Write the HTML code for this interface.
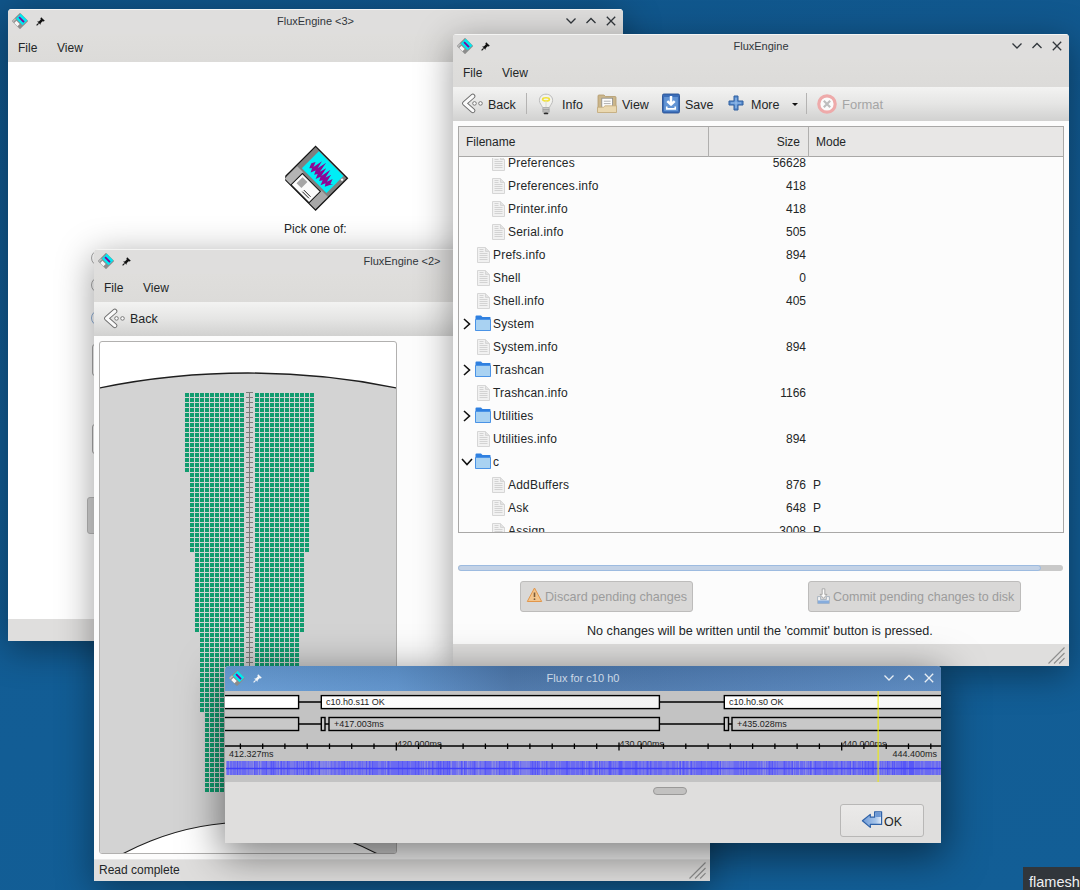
<!DOCTYPE html>
<html><head><meta charset="utf-8">
<style>
*{margin:0;padding:0;box-sizing:border-box}
html,body{width:1080px;height:890px;overflow:hidden}
body{position:relative;font-family:"Liberation Sans",sans-serif;font-size:12px;line-height:12px;color:#232627;
 background:linear-gradient(170deg,#10558a 0%,#125c94 40%,#125e96 100%)}
.a{position:absolute}
.t{position:absolute;white-space:nowrap}
.win{position:absolute;overflow:hidden;border-radius:4px 4px 0 0;background:#fcfcfc}
.sh{position:absolute;border-radius:4px 4px 0 0;box-shadow:0 3px 40px 2px rgba(0,0,0,.6)}
.tbar{position:absolute;left:0;right:0;top:0;height:25px;background:#dfdedd;border-top:1px solid #f4f4f3}
.ttl{position:absolute;left:0;right:0;top:7px;text-align:center;font-size:11px;line-height:11px;color:#31363b;white-space:nowrap}
.mbar{position:absolute;left:0;right:0;top:25px;height:28px;background:linear-gradient(#dfdedc,#dcdbd9)}
.tool{position:absolute;left:0;right:0;height:35px;background:linear-gradient(#f3f3f2,#e5e5e4 50%,#d1d1d0)}
.sbar{position:absolute;left:0;right:0;bottom:0;background:#dfdedd}
svg{position:absolute;overflow:visible}
.row{position:absolute;left:0;width:606px;height:23px}
</style></head><body>

<svg width="0" height="0" style="position:absolute">
<defs>
 <symbol id="appicon" viewBox="0 0 16 16">
  <g transform="rotate(45 8 8)">
   <rect x="2.2" y="2.2" width="11.6" height="11.6" fill="#8c8c8c"/>
   <rect x="3.4" y="2.4" width="9.4" height="6.8" fill="#00e8f0"/>
   <rect x="4.6" y="5" width="7" height="1.8" fill="#860096"/>
   <rect x="5.4" y="10.4" width="4.6" height="3.2" fill="#f6f6f6"/>
   <rect x="2.4" y="9.6" width="1.8" height="4" fill="#b8b8b8"/>
  </g>
 </symbol>
 <symbol id="pin" viewBox="0 0 10 10">
  <path d="M5.2 1.2 L8.8 4.8 L7.6 5.6 L6.6 5.2 L4.6 7.2 L4.8 8.2 L4.2 8.6 L1.4 5.8 L1.8 5.2 L2.8 5.4 L4.8 3.4 L4.4 2.4 Z" fill="#111"/>
  <path d="M2.6 7.4 L0.6 9.4" stroke="#111" stroke-width="1.2"/>
 </symbol>
 <symbol id="pinw" viewBox="0 0 10 10">
  <path d="M5.2 1.2 L8.8 4.8 L7.6 5.6 L6.6 5.2 L4.6 7.2 L4.8 8.2 L4.2 8.6 L1.4 5.8 L1.8 5.2 L2.8 5.4 L4.8 3.4 L4.4 2.4 Z" fill="#f4f6f8"/>
  <path d="M2.6 7.4 L0.6 9.4" stroke="#f4f6f8" stroke-width="1.2"/>
 </symbol>
 <symbol id="bmin" viewBox="0 0 12 12"><path d="M1.5 3.5 L6 8 L10.5 3.5" fill="none" stroke="currentColor" stroke-width="1.3"/></symbol>
 <symbol id="bmax" viewBox="0 0 12 12"><path d="M1.5 8 L6 3.5 L10.5 8" fill="none" stroke="currentColor" stroke-width="1.3"/></symbol>
 <symbol id="bclose" viewBox="0 0 12 12"><path d="M1.8 1.8 L10.2 10.2 M10.2 1.8 L1.8 10.2" fill="none" stroke="currentColor" stroke-width="1.3"/></symbol>
 <symbol id="file" viewBox="0 0 13 16">
  <path d="M0.5 0.5 H8.5 L12.5 4.5 V15.5 H0.5 Z" fill="#f1f1f1" stroke="#d6d6d6"/>
  <path d="M8.5 0.5 V4.5 H12.5" fill="#e2e2e2" stroke="#d6d6d6"/>
  <path d="M2.5 2.5 H6.5 M2.5 4.5 H6.5 M2.5 6.5 H10.5 M2.5 8.5 H10.5 M2.5 10.5 H10.5 M2.5 12.5 H10.5" stroke="#cfcfcf" stroke-width="0.9"/>
 </symbol>
 <symbol id="folder" viewBox="0 0 16 16">
  <path d="M0.5 1.5 Q0.5 0.5 1.5 0.5 H6 L7.5 2 H15 Q15.5 2 15.5 2.5 V15.5 H0.5 Z" fill="#2f80e0"/>
  <path d="M1 5 H15 V15 H1 Z" fill="#a9d2f2"/>
  <path d="M0.5 4.5 H15.5 V15.5 H0.5 Z" fill="none" stroke="#4a93e6" stroke-width="1"/>
 </symbol>
 <symbol id="chevR" viewBox="0 0 8 12"><path d="M1 1 L6.5 6 L1 11" fill="none" stroke="#111" stroke-width="1.6"/></symbol>
 <symbol id="chevD" viewBox="0 0 12 8"><path d="M1 1 L6 6.5 L11 1" fill="none" stroke="#111" stroke-width="1.6"/></symbol>
 <symbol id="back" viewBox="0 0 22 22">
  <path d="M11.8 3.2 L3.6 10.4 L11.8 17.6" fill="none" stroke="#6e6e6e" stroke-width="5" stroke-linecap="round" stroke-linejoin="round"/>
  <path d="M11.8 3.2 L3.6 10.4 L11.8 17.6" fill="none" stroke="#fafafa" stroke-width="3.2" stroke-linecap="round" stroke-linejoin="round"/>
  <circle cx="13.5" cy="10.4" r="1.8" fill="#fafafa" stroke="#6e6e6e" stroke-width="0.9"/>
  <circle cx="19.5" cy="10.4" r="1.8" fill="#fafafa" stroke="#6e6e6e" stroke-width="0.9"/>
 </symbol>
 <symbol id="bulb" viewBox="0 0 16 22">
  <path d="M8 1.2 C3.8 1.2 1.4 4 1.4 7.4 C1.4 10.4 3.6 11.8 4.6 14.6 H11.4 C12.4 11.8 14.6 10.4 14.6 7.4 C14.6 4 12.2 1.2 8 1.2 Z" fill="#f2f2ee" stroke="#b4b4b4" stroke-width="0.9"/>
  <ellipse cx="8" cy="6.4" rx="3.4" ry="1.6" fill="none" stroke="#f2e23a" stroke-width="1.6"/>
  <path d="M8 8 V14" stroke="#d8d8c8" stroke-width="0.9"/>
  <rect x="4.8" y="14.6" width="6.4" height="5.2" rx="0.8" fill="#d6d6d4" stroke="#9a9a9a" stroke-width="0.6"/>
  <path d="M4.8 16.3 H11.2 M4.8 18 H11.2" stroke="#8a8a8a" stroke-width="0.8"/>
  <ellipse cx="8" cy="20.4" rx="2.4" ry="0.9" fill="#2a2a2a"/>
 </symbol>
 <symbol id="viewf" viewBox="0 0 20 19">
  <path d="M1 2 Q1 1 2 1 H7 L8.5 2.5 H18 Q19 2.5 19 3.5 V18 H1 Z" fill="#cbb68b" stroke="#b39b6c" stroke-width="0.8"/>
  <rect x="4.8" y="4.2" width="10.8" height="10" fill="#fdfdfd" stroke="#8a8a8a" stroke-width="0.8"/>
  <path d="M6.8 7.2 H13.6 M6.8 9.6 H13.6" stroke="#b0b0b0" stroke-width="1"/>
  <path d="M0.5 13.2 H6.5 L8 11.8 H19.5 V18.5 H0.5 Z" fill="#ead8b0" stroke="#c2aa7a" stroke-width="0.8"/>
 </symbol>
 <symbol id="save" viewBox="0 0 19 21">
  <rect x="0.5" y="0.5" width="18" height="20" rx="1.5" fill="#3b6db8" stroke="#2a5496"/>
  <rect x="2.2" y="3.6" width="14.6" height="15" fill="#6294d4"/>
  <path d="M9.5 2.5 V11.5 M5.6 8 L9.5 11.8 L13.4 8" fill="none" stroke="#fff" stroke-width="2.6" stroke-linejoin="round"/>
  <path d="M5 13.6 V16.2 H14 V13.6" fill="none" stroke="#fff" stroke-width="1.7"/>
 </symbol>
 <symbol id="plus" viewBox="0 0 16 16">
  <path d="M6 1 H10 V6 H15 V10 H10 V15 H6 V10 H1 V6 H6 Z" fill="#5a8ed0" stroke="#2e5f9e" stroke-width="1"/>
  <path d="M8 3 V13 M3 8 H13" stroke="#9cc2ec" stroke-width="1"/>
 </symbol>
 <symbol id="fmt" viewBox="0 0 20 20">
  <circle cx="10" cy="10" r="8.2" fill="#fbfbfb" stroke="#eeaaaa" stroke-width="3.2"/>
  <path d="M6.8 6.8 L13.2 13.2 M13.2 6.8 L6.8 13.2" stroke="#bdbdbd" stroke-width="2.2"/>
 </symbol>
 <symbol id="warn" viewBox="0 0 16 16">
  <path d="M8 1 L15.2 14.5 H0.8 Z" fill="#f3c58d" stroke="#e2964a" stroke-width="1" stroke-linejoin="round"/>
  <path d="M8 5.5 V10" stroke="#7a5a3a" stroke-width="1.6"/><circle cx="8" cy="12.2" r="0.9" fill="#7a5a3a"/>
 </symbol>
 <symbol id="commit" viewBox="0 0 13 16">
  <path d="M0.6 8.6 H3.6 V11.6 H9.4 V8.6 H12.4 V15.4 H0.6 Z" fill="#f4f4f4" stroke="#9aa8b8" stroke-width="0.8"/>
  <rect x="1" y="12.4" width="11" height="3" fill="#86acdc"/>
  <path d="M5.2 0.8 H7.8 V6.4 H10 L6.5 10.4 L3 6.4 H5.2 Z" fill="#fafafa" stroke="#9c9c9c" stroke-width="0.8" stroke-linejoin="round"/>
 </symbol>
 <symbol id="okic" viewBox="0 0 22 19">
  <linearGradient id="okg" x1="0" x2="1" y1="0" y2="0"><stop offset="0" stop-color="#6f9ad6"/><stop offset="0.7" stop-color="#a9c6ea"/><stop offset="1" stop-color="#e6eef8"/></linearGradient>
  <path d="M1.4 9.8 L9.3 3.4 V6.2 H13.6 V0.8 H20.6 V13.4 H9.3 V16.4 Z" fill="url(#okg)" stroke="#2f62a8" stroke-width="1.2" stroke-linejoin="round"/>
  <rect x="14.4" y="1.6" width="5.4" height="4.4" fill="#6d98d4"/>
 </symbol>
 <symbol id="grip" viewBox="0 0 17 17">
  <path d="M0.5 16.5 L16.5 0.5 M6 16.5 L16.5 6 M11.2 16.5 L16.5 11.2" stroke="#8e8e8e" stroke-width="1.1"/>
 </symbol>
</defs>
</svg>

<div class="win" style="left:8px;top:9px;width:615px;height:632px;background:#fff;box-shadow:0 8px 36px 1px rgba(0,0,0,.38)">
<div class="tbar"></div>
<svg style="left:4px;top:4px" width="16" height="16" ><use href="#appicon" width="16" height="16"/></svg>
<svg style="left:28px;top:7px" width="10" height="10" ><use href="#pin" width="10" height="10"/></svg>
<div class="ttl" style="color:#31363b">FluxEngine &lt;3&gt;</div>
<svg style="left:557px;top:6px;color:#31363b" width="12" height="12"><use href="#bmin" width="12" height="12"/></svg>
<svg style="left:577px;top:6px;color:#31363b" width="12" height="12"><use href="#bmax" width="12" height="12"/></svg>
<svg style="left:597px;top:6px;color:#31363b" width="12" height="12"><use href="#bclose" width="12" height="12"/></svg>
<div class="mbar"></div><div class="t" style="left:10px;top:33px;font-size:12px;line-height:12px;">File</div><div class="t" style="left:49px;top:33px;font-size:12px;line-height:12px;">View</div>
<div class="sbar" style="height:22px"></div>
<svg style="left:274px;top:134px" width="68" height="68" viewBox="0 0 68 68">
<g transform="translate(33.6 3.4) rotate(45)">
<path d="M0 0 H45 V45 H3 L0 42 Z" fill="#808080" stroke="#141414" stroke-width="1.3"/>
<rect x="5.8" y="1.2" width="34.8" height="24" fill="#00eef6"/>
<path d="M9 15 L11 11 L13 16 L15 6 L17 14 L19 4 L21 15 L23 8 L25 17 L27 6 L29 15 L31 9 L33 17 L35 11 L37 16 L39 14 L37 18 L35 22 L33 19 L31 24 L29 19 L27 22 L25 18 L23 23 L21 18 L19 21 L17 17 L15 22 L13 18 L11 20 Z" fill="#8a0896"/>
<rect x="1" y="27" width="8.8" height="17.5" fill="#b4b4b4"/>
<rect x="35.2" y="27" width="9" height="17.5" fill="#a8a8a8"/>
<rect x="9.8" y="28.5" width="25.4" height="16" fill="#fbfbfb" stroke="#141414" stroke-width="1"/>
<rect x="12.5" y="31" width="7" height="8.5" fill="#a6a6a6"/>
<path d="M22.6 39.2 H32 M22.6 41.4 H32" stroke="#141414" stroke-width="0.9"/>
<rect x="41.2" y="3.8" width="2.2" height="2.2" fill="#f0f0f0"/>
</g></svg>
<div class="t" style="left:276px;top:214px;font-size:12px;line-height:12px;">Pick one of:</div>
<div class="a" style="left:83px;top:241px;width:16px;height:16px;border:1px solid #a8a8a8;border-radius:50%"></div>
<div class="a" style="left:83px;top:268px;width:16px;height:16px;border:1px solid #a8a8a8;border-radius:50%"></div>
<div class="a" style="left:83px;top:301px;width:16px;height:16px;border:1px solid #8fb0d8;border-radius:50%"></div>
<div class="a" style="left:84px;top:335px;width:20px;height:32px;border:1px solid #a8a8a8;border-radius:3px"></div>
<div class="a" style="left:84px;top:415px;width:20px;height:30px;border:1px solid #a8a8a8;border-radius:3px"></div>
<div class="a" style="left:79px;top:488px;width:20px;height:37px;background:#d4d4d4;border:1px solid #b8b8b8;border-radius:3px"></div>
</div>
<div class="win" style="left:94px;top:249px;width:616px;height:632px;background:#fcfcfc;box-shadow:0 8px 36px 1px rgba(0,0,0,.38)">
<div class="tbar"></div>
<svg style="left:4px;top:4px" width="16" height="16" ><use href="#appicon" width="16" height="16"/></svg>
<svg style="left:28px;top:7px" width="10" height="10" ><use href="#pin" width="10" height="10"/></svg>
<div class="ttl" style="color:#31363b">FluxEngine &lt;2&gt;</div>
<svg style="left:558px;top:6px;color:#31363b" width="12" height="12"><use href="#bmin" width="12" height="12"/></svg>
<svg style="left:578px;top:6px;color:#31363b" width="12" height="12"><use href="#bmax" width="12" height="12"/></svg>
<svg style="left:598px;top:6px;color:#31363b" width="12" height="12"><use href="#bclose" width="12" height="12"/></svg>
<div class="mbar"></div><div class="t" style="left:10px;top:33px;font-size:12px;line-height:12px;">File</div><div class="t" style="left:49px;top:33px;font-size:12px;line-height:12px;">View</div>
<div class="tool" style="top:53px;height:34px"></div>
<svg style="left:9px;top:59px" width="22" height="22" ><use href="#back" width="22" height="22"/></svg>
<div class="t" style="left:36px;top:64px;font-size:12.5px;line-height:12.5px;">Back</div>
<div class="a" style="left:5px;top:92px;width:298px;height:513px;border:1px solid #b1b0af;border-radius:3px;background:#fff;overflow:hidden">
<svg style="left:-1px;top:-1px" width="298" height="513" viewBox="99 341 298 513">
<circle cx="248" cy="1113" r="740" fill="#d3d3d3" stroke="#1e1e1e" stroke-width="1.3"/>
<circle cx="250" cy="1092" r="270" fill="#ffffff" stroke="#1e1e1e" stroke-width="1.2"/>
<defs><pattern id="cell" x="185" y="393" width="5" height="5" patternUnits="userSpaceOnUse"><rect x="0" y="0" width="4" height="4" fill="#119c6f"/></pattern></defs>
<rect x="185" y="393" width="60" height="80" fill="url(#cell)"/>
<rect x="255" y="393" width="60" height="80" fill="url(#cell)"/>
<rect x="190" y="473" width="55" height="80" fill="url(#cell)"/>
<rect x="255" y="473" width="55" height="80" fill="url(#cell)"/>
<rect x="195" y="553" width="50" height="80" fill="url(#cell)"/>
<rect x="255" y="553" width="50" height="80" fill="url(#cell)"/>
<rect x="200" y="633" width="45" height="80" fill="url(#cell)"/>
<rect x="255" y="633" width="45" height="80" fill="url(#cell)"/>
<rect x="205" y="713" width="40" height="80" fill="url(#cell)"/>
<rect x="255" y="713" width="40" height="80" fill="url(#cell)"/>
<path d="M249.5 392 V793 M246 392.5 H253 M246 397.5 H253 M246 402.5 H253 M246 407.5 H253 M246 412.5 H253 M246 417.5 H253 M246 422.5 H253 M246 427.5 H253 M246 432.5 H253 M246 437.5 H253 M246 442.5 H253 M246 447.5 H253 M246 452.5 H253 M246 457.5 H253 M246 462.5 H253 M246 467.5 H253 M246 472.5 H253 M246 477.5 H253 M246 482.5 H253 M246 487.5 H253 M246 492.5 H253 M246 497.5 H253 M246 502.5 H253 M246 507.5 H253 M246 512.5 H253 M246 517.5 H253 M246 522.5 H253 M246 527.5 H253 M246 532.5 H253 M246 537.5 H253 M246 542.5 H253 M246 547.5 H253 M246 552.5 H253 M246 557.5 H253 M246 562.5 H253 M246 567.5 H253 M246 572.5 H253 M246 577.5 H253 M246 582.5 H253 M246 587.5 H253 M246 592.5 H253 M246 597.5 H253 M246 602.5 H253 M246 607.5 H253 M246 612.5 H253 M246 617.5 H253 M246 622.5 H253 M246 627.5 H253 M246 632.5 H253 M246 637.5 H253 M246 642.5 H253 M246 647.5 H253 M246 652.5 H253 M246 657.5 H253 M246 662.5 H253 M246 667.5 H253 M246 672.5 H253 M246 677.5 H253 M246 682.5 H253 M246 687.5 H253 M246 692.5 H253 M246 697.5 H253 M246 702.5 H253 M246 707.5 H253 M246 712.5 H253 M246 717.5 H253 M246 722.5 H253 M246 727.5 H253 M246 732.5 H253 M246 737.5 H253 M246 742.5 H253 M246 747.5 H253 M246 752.5 H253 M246 757.5 H253 M246 762.5 H253 M246 767.5 H253 M246 772.5 H253 M246 777.5 H253 M246 782.5 H253 M246 787.5 H253 M246 792.5 H253" stroke="#7c7c7c" stroke-width="1"/>
</svg></div>
<div class="sbar" style="height:22px;border-top:1px solid #e8e8e8"></div>
<div class="t" style="left:5px;top:615px;font-size:12px;line-height:12px;">Read complete</div>
<svg style="left:595px;top:613px" width="17" height="17" ><use href="#grip" width="17" height="17"/></svg>
</div>
<div class="win" style="left:453px;top:34px;width:616px;height:632px;background:#fcfcfc;box-shadow:0 8px 36px 1px rgba(0,0,0,.38)">
<div class="tbar"></div>
<svg style="left:4px;top:4px" width="16" height="16" ><use href="#appicon" width="16" height="16"/></svg>
<svg style="left:28px;top:7px" width="10" height="10" ><use href="#pin" width="10" height="10"/></svg>
<div class="ttl" style="color:#31363b">FluxEngine</div>
<svg style="left:558px;top:6px;color:#31363b" width="12" height="12"><use href="#bmin" width="12" height="12"/></svg>
<svg style="left:578px;top:6px;color:#31363b" width="12" height="12"><use href="#bmax" width="12" height="12"/></svg>
<svg style="left:598px;top:6px;color:#31363b" width="12" height="12"><use href="#bclose" width="12" height="12"/></svg>
<div class="mbar"></div><div class="t" style="left:10px;top:33px;font-size:12px;line-height:12px;">File</div><div class="t" style="left:49px;top:33px;font-size:12px;line-height:12px;">View</div>
<div class="tool" style="top:53px;height:34px"></div>
<svg style="left:8px;top:59px" width="22" height="22" ><use href="#back" width="22" height="22"/></svg>
<div class="t" style="left:35px;top:65px;font-size:12.5px;line-height:12.5px;">Back</div>
<div class="a" style="left:73px;top:59px;width:1px;height:21px;background:#b4b3b2"></div>
<svg style="left:85px;top:59px" width="16" height="22" ><use href="#bulb" width="16" height="22"/></svg>
<div class="t" style="left:109px;top:65px;font-size:12.5px;line-height:12.5px;">Info</div>
<svg style="left:144px;top:60px" width="20" height="19" ><use href="#viewf" width="20" height="19"/></svg>
<div class="t" style="left:169px;top:65px;font-size:12.5px;line-height:12.5px;">View</div>
<svg style="left:209px;top:59px" width="18" height="21" ><use href="#save" width="18" height="21"/></svg>
<div class="t" style="left:232px;top:65px;font-size:12.5px;line-height:12.5px;">Save</div>
<svg style="left:275px;top:61px" width="16" height="16" ><use href="#plus" width="16" height="16"/></svg>
<div class="t" style="left:298px;top:65px;font-size:12.5px;line-height:12.5px;">More</div>
<div class="a" style="left:339px;top:69px;width:0;height:0;border-left:3px solid transparent;border-right:3px solid transparent;border-top:3px solid #111"></div>
<div class="a" style="left:353px;top:59px;width:1px;height:21px;background:#b4b3b2"></div>
<svg style="left:364px;top:60px" width="20" height="20" ><use href="#fmt" width="20" height="20"/></svg>
<div class="t" style="left:389px;top:64px;font-size:13px;line-height:13px;color:#a5a5a5;">Format</div>
<div class="a" style="left:5px;top:92px;width:606px;height:407px;border:1px solid #a9a8a7;background:#fcfcfc;overflow:hidden">
<div class="a" style="left:0;top:0;width:605px;height:30px;background:#e8e7e6;border-bottom:1px solid #a9a8a7"></div>
<div class="a" style="left:249px;top:0;width:1px;height:30px;background:#b0afae"></div>
<div class="a" style="left:349px;top:0;width:1px;height:30px;background:#b0afae"></div>
<div class="t" style="left:7px;top:9px;font-size:12px;line-height:12px;">Filename</div>
<div class="t" style="left:0;width:341px;top:9px;text-align:right;font-size:12px;line-height:12px">Size</div>
<div class="t" style="left:357px;top:9px;font-size:12px;line-height:12px;">Mode</div>
<div class="a" style="left:0;top:31px;width:605px;height:375px;overflow:hidden">
<svg style="left:33px;top:-3px" width="13" height="16" ><use href="#file" width="13" height="16"/></svg>
<div class="t" style="left:49px;top:-1px;font-size:12px;line-height:12px;letter-spacing:0.2px">Preferences</div>
<div class="t" style="left:0;width:347px;top:-1px;text-align:right;font-size:12px;line-height:12px">56628</div>
<svg style="left:33px;top:20px" width="13" height="16" ><use href="#file" width="13" height="16"/></svg>
<div class="t" style="left:49px;top:22px;font-size:12px;line-height:12px;letter-spacing:0.2px">Preferences.info</div>
<div class="t" style="left:0;width:347px;top:22px;text-align:right;font-size:12px;line-height:12px">418</div>
<svg style="left:33px;top:43px" width="13" height="16" ><use href="#file" width="13" height="16"/></svg>
<div class="t" style="left:49px;top:45px;font-size:12px;line-height:12px;letter-spacing:0.2px">Printer.info</div>
<div class="t" style="left:0;width:347px;top:45px;text-align:right;font-size:12px;line-height:12px">418</div>
<svg style="left:33px;top:66px" width="13" height="16" ><use href="#file" width="13" height="16"/></svg>
<div class="t" style="left:49px;top:68px;font-size:12px;line-height:12px;letter-spacing:0.2px">Serial.info</div>
<div class="t" style="left:0;width:347px;top:68px;text-align:right;font-size:12px;line-height:12px">505</div>
<svg style="left:18px;top:89px" width="13" height="16" ><use href="#file" width="13" height="16"/></svg>
<div class="t" style="left:34px;top:91px;font-size:12px;line-height:12px;letter-spacing:0.2px">Prefs.info</div>
<div class="t" style="left:0;width:347px;top:91px;text-align:right;font-size:12px;line-height:12px">894</div>
<svg style="left:18px;top:112px" width="13" height="16" ><use href="#file" width="13" height="16"/></svg>
<div class="t" style="left:34px;top:114px;font-size:12px;line-height:12px;letter-spacing:0.2px">Shell</div>
<div class="t" style="left:0;width:347px;top:114px;text-align:right;font-size:12px;line-height:12px">0</div>
<svg style="left:18px;top:135px" width="13" height="16" ><use href="#file" width="13" height="16"/></svg>
<div class="t" style="left:34px;top:137px;font-size:12px;line-height:12px;letter-spacing:0.2px">Shell.info</div>
<div class="t" style="left:0;width:347px;top:137px;text-align:right;font-size:12px;line-height:12px">405</div>
<svg style="left:16px;top:157px" width="16" height="16" ><use href="#folder" width="16" height="16"/></svg>
<svg style="left:4px;top:160px" width="8" height="12" ><use href="#chevR" width="8" height="12"/></svg>
<div class="t" style="left:34px;top:160px;font-size:12px;line-height:12px;letter-spacing:0.2px">System</div>
<svg style="left:18px;top:181px" width="13" height="16" ><use href="#file" width="13" height="16"/></svg>
<div class="t" style="left:34px;top:183px;font-size:12px;line-height:12px;letter-spacing:0.2px">System.info</div>
<div class="t" style="left:0;width:347px;top:183px;text-align:right;font-size:12px;line-height:12px">894</div>
<svg style="left:16px;top:203px" width="16" height="16" ><use href="#folder" width="16" height="16"/></svg>
<svg style="left:4px;top:206px" width="8" height="12" ><use href="#chevR" width="8" height="12"/></svg>
<div class="t" style="left:34px;top:206px;font-size:12px;line-height:12px;letter-spacing:0.2px">Trashcan</div>
<svg style="left:18px;top:227px" width="13" height="16" ><use href="#file" width="13" height="16"/></svg>
<div class="t" style="left:34px;top:229px;font-size:12px;line-height:12px;letter-spacing:0.2px">Trashcan.info</div>
<div class="t" style="left:0;width:347px;top:229px;text-align:right;font-size:12px;line-height:12px">1166</div>
<svg style="left:16px;top:249px" width="16" height="16" ><use href="#folder" width="16" height="16"/></svg>
<svg style="left:4px;top:252px" width="8" height="12" ><use href="#chevR" width="8" height="12"/></svg>
<div class="t" style="left:34px;top:252px;font-size:12px;line-height:12px;letter-spacing:0.2px">Utilities</div>
<svg style="left:18px;top:273px" width="13" height="16" ><use href="#file" width="13" height="16"/></svg>
<div class="t" style="left:34px;top:275px;font-size:12px;line-height:12px;letter-spacing:0.2px">Utilities.info</div>
<div class="t" style="left:0;width:347px;top:275px;text-align:right;font-size:12px;line-height:12px">894</div>
<svg style="left:16px;top:295px" width="16" height="16" ><use href="#folder" width="16" height="16"/></svg>
<svg style="left:2px;top:300px" width="12" height="8" ><use href="#chevD" width="12" height="8"/></svg>
<div class="t" style="left:34px;top:298px;font-size:12px;line-height:12px;letter-spacing:0.2px">c</div>
<svg style="left:33px;top:319px" width="13" height="16" ><use href="#file" width="13" height="16"/></svg>
<div class="t" style="left:49px;top:321px;font-size:12px;line-height:12px;letter-spacing:0.2px">AddBuffers</div>
<div class="t" style="left:0;width:347px;top:321px;text-align:right;font-size:12px;line-height:12px">876</div>
<div class="t" style="left:354px;top:321px;font-size:12px;line-height:12px;">P</div>
<svg style="left:33px;top:342px" width="13" height="16" ><use href="#file" width="13" height="16"/></svg>
<div class="t" style="left:49px;top:344px;font-size:12px;line-height:12px;letter-spacing:0.2px">Ask</div>
<div class="t" style="left:0;width:347px;top:344px;text-align:right;font-size:12px;line-height:12px">648</div>
<div class="t" style="left:354px;top:344px;font-size:12px;line-height:12px;">P</div>
<svg style="left:33px;top:365px" width="13" height="16" ><use href="#file" width="13" height="16"/></svg>
<div class="t" style="left:49px;top:367px;font-size:12px;line-height:12px;letter-spacing:0.2px">Assign</div>
<div class="t" style="left:0;width:347px;top:367px;text-align:right;font-size:12px;line-height:12px">3008</div>
<div class="t" style="left:354px;top:367px;font-size:12px;line-height:12px;">P</div>
</div>
</div>
<div class="a" style="left:5px;top:531px;width:605px;height:6px;border-radius:3px;background:#c9c9c9;overflow:hidden"><div class="a" style="left:0;top:0;width:583px;height:6px;border-radius:3px;background:#c3d2e6;border:1px solid #9dbbe0"></div></div>
<div class="a" style="left:67px;top:547px;width:173px;height:31px;border:1px solid #bdbcbb;border-radius:3px;background:#d9d8d7"></div>
<svg style="left:73px;top:553px" width="17" height="16" ><use href="#warn" width="17" height="16"/></svg>
<div class="t" style="left:92px;top:557px;font-size:12.6px;line-height:12.6px;color:#9c9c9c;">Discard pending changes</div>
<div class="a" style="left:355px;top:547px;width:213px;height:31px;border:1px solid #bdbcbb;border-radius:3px;background:#d9d8d7"></div>
<svg style="left:364px;top:554px" width="13" height="16" ><use href="#commit" width="13" height="16"/></svg>
<div class="t" style="left:380px;top:557px;font-size:12.5px;line-height:12.5px;color:#9c9c9c;">Commit pending changes to disk</div>
<div class="t" style="left:134px;top:591px;font-size:12.6px;line-height:12.6px;">No changes will be written until the 'commit' button is pressed.</div>
<div class="sbar" style="height:22px"></div>
<svg style="left:595px;top:613px" width="17" height="17" ><use href="#grip" width="17" height="17"/></svg>
</div>
<div class="win" style="left:225px;top:666px;width:716px;height:177px;background:#dfdedd;box-shadow:0 10px 40px 3px rgba(0,0,0,.5)">
<div class="tbar" style="background:linear-gradient(rgba(0,0,0,.06),rgba(255,255,255,.04)),linear-gradient(90deg,#6499d1 0%,#5c90c9 24%,#4a74a7 40%,#4c78ad 60%,#5887be 100%);border-top:0"></div>
<svg style="left:4px;top:4px" width="16" height="16" ><use href="#appicon" width="16" height="16"/></svg>
<svg style="left:28px;top:7px" width="10" height="10" ><use href="#pinw" width="10" height="10"/></svg>
<div class="ttl" style="color:#ccd9e6">Flux for c10 h0</div>
<svg style="left:658px;top:6px;color:#e8eef4" width="12" height="12"><use href="#bmin" width="12" height="12"/></svg>
<svg style="left:678px;top:6px;color:#e8eef4" width="12" height="12"><use href="#bmax" width="12" height="12"/></svg>
<svg style="left:698px;top:6px;color:#e8eef4" width="12" height="12"><use href="#bclose" width="12" height="12"/></svg>
<svg style="left:0;top:25px" width="716" height="91" viewBox="225 691 716 91">
<rect x="225" y="691" width="716" height="91" fill="#c3c3c3"/>
<defs><linearGradient id="wg" x1="0" x2="1"><stop offset="0" stop-color="#fff"/><stop offset="1" stop-color="#f2f2f2"/></linearGradient></defs>
<path d="M298.6 702 H321.3 M659.4 702 H724.3 M298.6 724 H321.3 M325 724 H329 M659.4 724 H724.3 M728.5 724 H732" stroke="#000" stroke-width="1.4"/>
<rect x="200" y="695.6" width="98.60000000000002" height="13.0" fill="#fff" stroke="#000" stroke-width="1.4"/>
<rect x="321.3" y="695.6" width="338.09999999999997" height="13.0" fill="url(#wg)" stroke="#000" stroke-width="1.4"/>
<rect x="724.3" y="695.6" width="275.70000000000005" height="13.0" fill="url(#wg)" stroke="#000" stroke-width="1.4"/>
<rect x="200" y="717.5" width="98.60000000000002" height="13.0" fill="#c8c8c8" stroke="#000" stroke-width="1.4"/>
<rect x="321.3" y="717.5" width="3.6999999999999886" height="13.0" fill="#c8c8c8" stroke="#000" stroke-width="1.4"/>
<rect x="329" y="717.5" width="330.4" height="13.0" fill="#c8c8c8" stroke="#000" stroke-width="1.4"/>
<rect x="724.3" y="717.5" width="4.2000000000000455" height="13.0" fill="#c8c8c8" stroke="#000" stroke-width="1.4"/>
<rect x="732" y="717.5" width="268" height="13.0" fill="#c8c8c8" stroke="#000" stroke-width="1.4"/>
<path d="M225 746 H941" stroke="#000" stroke-width="1.3"/>
<path d="M240.4 743.5 V749 M262.7 743.5 V749 M284.9 743.5 V749 M307.2 743.5 V749 M329.5 743.5 V749 M351.7 743.5 V749 M374.0 743.5 V749 M396.3 742.5 V750.5 M418.5 743.5 V749 M440.8 743.5 V749 M463.1 743.5 V749 M485.4 743.5 V749 M507.6 743.5 V749 M529.9 743.5 V749 M552.2 743.5 V749 M574.4 743.5 V749 M596.7 743.5 V749 M619.0 742.5 V750.5 M641.2 743.5 V749 M663.5 743.5 V749 M685.8 743.5 V749 M708.1 743.5 V749 M730.3 743.5 V749 M752.6 743.5 V749 M774.9 743.5 V749 M797.1 743.5 V749 M819.4 743.5 V749 M841.7 742.5 V750.5 M863.9 743.5 V749 M886.2 743.5 V749 M908.5 743.5 V749 M930.8 743.5 V749" stroke="#000" stroke-width="1.3"/>
<g font-family="Liberation Sans" font-size="9" fill="#222">
<text x="326" y="705">c10.h0.s11 OK</text>
<text x="729" y="705">c10.h0.s0 OK</text>
<text x="334" y="727">+417.003ms</text>
<text x="737" y="727">+435.028ms</text>
<text x="397" y="747">420.000ms</text>
<text x="619.5" y="747">430.000ms</text>
<text x="842" y="747">440.000ms</text>
<text x="229" y="757">412.327ms</text>
<text x="937" y="757" text-anchor="end">444.400ms</text>
</g>
<rect x="226" y="761" width="715" height="14" fill="#6a6af2"/>
<rect x="226" y="761" width="1" height="14" fill="#8c8ce4"/>
<rect x="229" y="761" width="1" height="14" fill="#8c8ce4"/>
<rect x="232" y="761" width="1" height="14" fill="#7a7aea"/>
<rect x="236" y="761" width="1" height="14" fill="#7a7aea"/>
<rect x="237" y="761" width="1" height="14" fill="#5858f6"/>
<rect x="238" y="761" width="1" height="14" fill="#7a7aea"/>
<rect x="241" y="761" width="1" height="14" fill="#7a7aea"/>
<rect x="246" y="761" width="1" height="14" fill="#7a7aea"/>
<rect x="247" y="761" width="1" height="14" fill="#7a7aea"/>
<rect x="249" y="761" width="1" height="14" fill="#7a7aea"/>
<rect x="250" y="761" width="1" height="14" fill="#7a7aea"/>
<rect x="251" y="761" width="1" height="14" fill="#7a7aea"/>
<rect x="252" y="761" width="1" height="14" fill="#7a7aea"/>
<rect x="253" y="761" width="1" height="14" fill="#8c8ce4"/>
<rect x="254" y="761" width="1" height="14" fill="#5858f6"/>
<rect x="258" y="761" width="1" height="14" fill="#8c8ce4"/>
<rect x="260" y="761" width="1" height="14" fill="#8c8ce4"/>
<rect x="261" y="761" width="1" height="14" fill="#7a7aea"/>
<rect x="266" y="761" width="1" height="14" fill="#5858f6"/>
<rect x="267" y="761" width="1" height="14" fill="#7a7aea"/>
<rect x="268" y="761" width="1" height="14" fill="#7a7aea"/>
<rect x="269" y="761" width="1" height="14" fill="#7a7aea"/>
<rect x="271" y="761" width="1" height="14" fill="#5858f6"/>
<rect x="273" y="761" width="1" height="14" fill="#5858f6"/>
<rect x="276" y="761" width="1" height="14" fill="#7a7aea"/>
<rect x="277" y="761" width="1" height="14" fill="#7a7aea"/>
<rect x="279" y="761" width="1" height="14" fill="#8c8ce4"/>
<rect x="281" y="761" width="1" height="14" fill="#5858f6"/>
<rect x="282" y="761" width="1" height="14" fill="#7a7aea"/>
<rect x="285" y="761" width="1" height="14" fill="#7a7aea"/>
<rect x="286" y="761" width="1" height="14" fill="#7a7aea"/>
<rect x="287" y="761" width="1" height="14" fill="#5858f6"/>
<rect x="290" y="761" width="1" height="14" fill="#7a7aea"/>
<rect x="291" y="761" width="1" height="14" fill="#7a7aea"/>
<rect x="292" y="761" width="1" height="14" fill="#7a7aea"/>
<rect x="293" y="761" width="1" height="14" fill="#7a7aea"/>
<rect x="295" y="761" width="1" height="14" fill="#7a7aea"/>
<rect x="297" y="761" width="1" height="14" fill="#5858f6"/>
<rect x="298" y="761" width="1" height="14" fill="#7a7aea"/>
<rect x="300" y="761" width="1" height="14" fill="#7a7aea"/>
<rect x="302" y="761" width="1" height="14" fill="#7a7aea"/>
<rect x="303" y="761" width="1" height="14" fill="#5858f6"/>
<rect x="304" y="761" width="1" height="14" fill="#7a7aea"/>
<rect x="305" y="761" width="1" height="14" fill="#7a7aea"/>
<rect x="308" y="761" width="1" height="14" fill="#5858f6"/>
<rect x="310" y="761" width="1" height="14" fill="#7a7aea"/>
<rect x="311" y="761" width="1" height="14" fill="#5858f6"/>
<rect x="314" y="761" width="1" height="14" fill="#7a7aea"/>
<rect x="316" y="761" width="1" height="14" fill="#7a7aea"/>
<rect x="317" y="761" width="1" height="14" fill="#7a7aea"/>
<rect x="319" y="761" width="1" height="14" fill="#5858f6"/>
<rect x="320" y="761" width="1" height="14" fill="#7a7aea"/>
<rect x="321" y="761" width="1" height="14" fill="#7a7aea"/>
<rect x="322" y="761" width="1" height="14" fill="#7a7aea"/>
<rect x="324" y="761" width="1" height="14" fill="#7a7aea"/>
<rect x="326" y="761" width="1" height="14" fill="#5858f6"/>
<rect x="327" y="761" width="1" height="14" fill="#8c8ce4"/>
<rect x="329" y="761" width="1" height="14" fill="#8c8ce4"/>
<rect x="332" y="761" width="1" height="14" fill="#7a7aea"/>
<rect x="333" y="761" width="1" height="14" fill="#7a7aea"/>
<rect x="336" y="761" width="1" height="14" fill="#7a7aea"/>
<rect x="337" y="761" width="1" height="14" fill="#7a7aea"/>
<rect x="340" y="761" width="1" height="14" fill="#7a7aea"/>
<rect x="344" y="761" width="1" height="14" fill="#5858f6"/>
<rect x="345" y="761" width="1" height="14" fill="#7a7aea"/>
<rect x="346" y="761" width="1" height="14" fill="#7a7aea"/>
<rect x="348" y="761" width="1" height="14" fill="#7a7aea"/>
<rect x="350" y="761" width="1" height="14" fill="#7a7aea"/>
<rect x="353" y="761" width="1" height="14" fill="#7a7aea"/>
<rect x="354" y="761" width="1" height="14" fill="#7a7aea"/>
<rect x="356" y="761" width="1" height="14" fill="#7a7aea"/>
<rect x="357" y="761" width="1" height="14" fill="#7a7aea"/>
<rect x="361" y="761" width="1" height="14" fill="#7a7aea"/>
<rect x="363" y="761" width="1" height="14" fill="#7a7aea"/>
<rect x="364" y="761" width="1" height="14" fill="#7a7aea"/>
<rect x="365" y="761" width="1" height="14" fill="#7a7aea"/>
<rect x="366" y="761" width="1" height="14" fill="#5858f6"/>
<rect x="367" y="761" width="1" height="14" fill="#7a7aea"/>
<rect x="368" y="761" width="1" height="14" fill="#7a7aea"/>
<rect x="369" y="761" width="1" height="14" fill="#5858f6"/>
<rect x="371" y="761" width="1" height="14" fill="#7a7aea"/>
<rect x="372" y="761" width="1" height="14" fill="#5858f6"/>
<rect x="378" y="761" width="1" height="14" fill="#7a7aea"/>
<rect x="379" y="761" width="1" height="14" fill="#7a7aea"/>
<rect x="380" y="761" width="1" height="14" fill="#7a7aea"/>
<rect x="384" y="761" width="1" height="14" fill="#7a7aea"/>
<rect x="386" y="761" width="1" height="14" fill="#8c8ce4"/>
<rect x="388" y="761" width="1" height="14" fill="#5858f6"/>
<rect x="390" y="761" width="1" height="14" fill="#7a7aea"/>
<rect x="398" y="761" width="1" height="14" fill="#5858f6"/>
<rect x="402" y="761" width="1" height="14" fill="#5858f6"/>
<rect x="407" y="761" width="1" height="14" fill="#5858f6"/>
<rect x="410" y="761" width="1" height="14" fill="#7a7aea"/>
<rect x="415" y="761" width="1" height="14" fill="#5858f6"/>
<rect x="418" y="761" width="1" height="14" fill="#5858f6"/>
<rect x="420" y="761" width="1" height="14" fill="#7a7aea"/>
<rect x="422" y="761" width="1" height="14" fill="#7a7aea"/>
<rect x="424" y="761" width="1" height="14" fill="#8c8ce4"/>
<rect x="425" y="761" width="1" height="14" fill="#7a7aea"/>
<rect x="427" y="761" width="1" height="14" fill="#8c8ce4"/>
<rect x="430" y="761" width="1" height="14" fill="#7a7aea"/>
<rect x="431" y="761" width="1" height="14" fill="#7a7aea"/>
<rect x="432" y="761" width="1" height="14" fill="#5858f6"/>
<rect x="434" y="761" width="1" height="14" fill="#7a7aea"/>
<rect x="435" y="761" width="1" height="14" fill="#7a7aea"/>
<rect x="438" y="761" width="1" height="14" fill="#5858f6"/>
<rect x="440" y="761" width="1" height="14" fill="#5858f6"/>
<rect x="442" y="761" width="1" height="14" fill="#7a7aea"/>
<rect x="443" y="761" width="1" height="14" fill="#5858f6"/>
<rect x="447" y="761" width="1" height="14" fill="#5858f6"/>
<rect x="449" y="761" width="1" height="14" fill="#5858f6"/>
<rect x="450" y="761" width="1" height="14" fill="#7a7aea"/>
<rect x="451" y="761" width="1" height="14" fill="#8c8ce4"/>
<rect x="456" y="761" width="1" height="14" fill="#7a7aea"/>
<rect x="457" y="761" width="1" height="14" fill="#7a7aea"/>
<rect x="458" y="761" width="1" height="14" fill="#8c8ce4"/>
<rect x="459" y="761" width="1" height="14" fill="#7a7aea"/>
<rect x="460" y="761" width="1" height="14" fill="#7a7aea"/>
<rect x="461" y="761" width="1" height="14" fill="#5858f6"/>
<rect x="463" y="761" width="1" height="14" fill="#8c8ce4"/>
<rect x="464" y="761" width="1" height="14" fill="#5858f6"/>
<rect x="467" y="761" width="1" height="14" fill="#8c8ce4"/>
<rect x="468" y="761" width="1" height="14" fill="#7a7aea"/>
<rect x="469" y="761" width="1" height="14" fill="#7a7aea"/>
<rect x="471" y="761" width="1" height="14" fill="#7a7aea"/>
<rect x="474" y="761" width="1" height="14" fill="#5858f6"/>
<rect x="476" y="761" width="1" height="14" fill="#7a7aea"/>
<rect x="477" y="761" width="1" height="14" fill="#7a7aea"/>
<rect x="478" y="761" width="1" height="14" fill="#8c8ce4"/>
<rect x="479" y="761" width="1" height="14" fill="#7a7aea"/>
<rect x="481" y="761" width="1" height="14" fill="#7a7aea"/>
<rect x="482" y="761" width="1" height="14" fill="#7a7aea"/>
<rect x="483" y="761" width="1" height="14" fill="#7a7aea"/>
<rect x="485" y="761" width="1" height="14" fill="#5858f6"/>
<rect x="491" y="761" width="1" height="14" fill="#7a7aea"/>
<rect x="492" y="761" width="1" height="14" fill="#8c8ce4"/>
<rect x="493" y="761" width="1" height="14" fill="#7a7aea"/>
<rect x="494" y="761" width="1" height="14" fill="#7a7aea"/>
<rect x="495" y="761" width="1" height="14" fill="#8c8ce4"/>
<rect x="497" y="761" width="1" height="14" fill="#7a7aea"/>
<rect x="498" y="761" width="1" height="14" fill="#7a7aea"/>
<rect x="499" y="761" width="1" height="14" fill="#5858f6"/>
<rect x="504" y="761" width="1" height="14" fill="#5858f6"/>
<rect x="507" y="761" width="1" height="14" fill="#7a7aea"/>
<rect x="510" y="761" width="1" height="14" fill="#7a7aea"/>
<rect x="511" y="761" width="1" height="14" fill="#8c8ce4"/>
<rect x="514" y="761" width="1" height="14" fill="#5858f6"/>
<rect x="519" y="761" width="1" height="14" fill="#8c8ce4"/>
<rect x="521" y="761" width="1" height="14" fill="#7a7aea"/>
<rect x="526" y="761" width="1" height="14" fill="#7a7aea"/>
<rect x="532" y="761" width="1" height="14" fill="#5858f6"/>
<rect x="535" y="761" width="1" height="14" fill="#5858f6"/>
<rect x="536" y="761" width="1" height="14" fill="#7a7aea"/>
<rect x="537" y="761" width="1" height="14" fill="#5858f6"/>
<rect x="540" y="761" width="1" height="14" fill="#8c8ce4"/>
<rect x="541" y="761" width="1" height="14" fill="#7a7aea"/>
<rect x="543" y="761" width="1" height="14" fill="#7a7aea"/>
<rect x="545" y="761" width="1" height="14" fill="#7a7aea"/>
<rect x="546" y="761" width="1" height="14" fill="#5858f6"/>
<rect x="548" y="761" width="1" height="14" fill="#7a7aea"/>
<rect x="549" y="761" width="1" height="14" fill="#7a7aea"/>
<rect x="555" y="761" width="1" height="14" fill="#8c8ce4"/>
<rect x="557" y="761" width="1" height="14" fill="#7a7aea"/>
<rect x="558" y="761" width="1" height="14" fill="#7a7aea"/>
<rect x="560" y="761" width="1" height="14" fill="#7a7aea"/>
<rect x="566" y="761" width="1" height="14" fill="#5858f6"/>
<rect x="567" y="761" width="1" height="14" fill="#5858f6"/>
<rect x="570" y="761" width="1" height="14" fill="#7a7aea"/>
<rect x="575" y="761" width="1" height="14" fill="#7a7aea"/>
<rect x="579" y="761" width="1" height="14" fill="#7a7aea"/>
<rect x="582" y="761" width="1" height="14" fill="#5858f6"/>
<rect x="585" y="761" width="1" height="14" fill="#8c8ce4"/>
<rect x="587" y="761" width="1" height="14" fill="#7a7aea"/>
<rect x="589" y="761" width="1" height="14" fill="#5858f6"/>
<rect x="592" y="761" width="1" height="14" fill="#7a7aea"/>
<rect x="593" y="761" width="1" height="14" fill="#8c8ce4"/>
<rect x="594" y="761" width="1" height="14" fill="#7a7aea"/>
<rect x="595" y="761" width="1" height="14" fill="#5858f6"/>
<rect x="598" y="761" width="1" height="14" fill="#8c8ce4"/>
<rect x="599" y="761" width="1" height="14" fill="#5858f6"/>
<rect x="600" y="761" width="1" height="14" fill="#7a7aea"/>
<rect x="603" y="761" width="1" height="14" fill="#7a7aea"/>
<rect x="605" y="761" width="1" height="14" fill="#7a7aea"/>
<rect x="606" y="761" width="1" height="14" fill="#7a7aea"/>
<rect x="607" y="761" width="1" height="14" fill="#7a7aea"/>
<rect x="609" y="761" width="1" height="14" fill="#5858f6"/>
<rect x="610" y="761" width="1" height="14" fill="#5858f6"/>
<rect x="612" y="761" width="1" height="14" fill="#7a7aea"/>
<rect x="614" y="761" width="1" height="14" fill="#7a7aea"/>
<rect x="616" y="761" width="1" height="14" fill="#7a7aea"/>
<rect x="617" y="761" width="1" height="14" fill="#7a7aea"/>
<rect x="619" y="761" width="1" height="14" fill="#5858f6"/>
<rect x="620" y="761" width="1" height="14" fill="#5858f6"/>
<rect x="621" y="761" width="1" height="14" fill="#5858f6"/>
<rect x="623" y="761" width="1" height="14" fill="#7a7aea"/>
<rect x="624" y="761" width="1" height="14" fill="#7a7aea"/>
<rect x="631" y="761" width="1" height="14" fill="#7a7aea"/>
<rect x="635" y="761" width="1" height="14" fill="#5858f6"/>
<rect x="636" y="761" width="1" height="14" fill="#5858f6"/>
<rect x="638" y="761" width="1" height="14" fill="#7a7aea"/>
<rect x="641" y="761" width="1" height="14" fill="#7a7aea"/>
<rect x="642" y="761" width="1" height="14" fill="#7a7aea"/>
<rect x="644" y="761" width="1" height="14" fill="#7a7aea"/>
<rect x="645" y="761" width="1" height="14" fill="#7a7aea"/>
<rect x="647" y="761" width="1" height="14" fill="#5858f6"/>
<rect x="649" y="761" width="1" height="14" fill="#7a7aea"/>
<rect x="650" y="761" width="1" height="14" fill="#5858f6"/>
<rect x="652" y="761" width="1" height="14" fill="#7a7aea"/>
<rect x="653" y="761" width="1" height="14" fill="#7a7aea"/>
<rect x="657" y="761" width="1" height="14" fill="#7a7aea"/>
<rect x="662" y="761" width="1" height="14" fill="#7a7aea"/>
<rect x="663" y="761" width="1" height="14" fill="#7a7aea"/>
<rect x="664" y="761" width="1" height="14" fill="#7a7aea"/>
<rect x="665" y="761" width="1" height="14" fill="#7a7aea"/>
<rect x="669" y="761" width="1" height="14" fill="#7a7aea"/>
<rect x="670" y="761" width="1" height="14" fill="#7a7aea"/>
<rect x="671" y="761" width="1" height="14" fill="#7a7aea"/>
<rect x="675" y="761" width="1" height="14" fill="#7a7aea"/>
<rect x="676" y="761" width="1" height="14" fill="#7a7aea"/>
<rect x="678" y="761" width="1" height="14" fill="#8c8ce4"/>
<rect x="680" y="761" width="1" height="14" fill="#5858f6"/>
<rect x="681" y="761" width="1" height="14" fill="#8c8ce4"/>
<rect x="683" y="761" width="1" height="14" fill="#5858f6"/>
<rect x="685" y="761" width="1" height="14" fill="#7a7aea"/>
<rect x="688" y="761" width="1" height="14" fill="#7a7aea"/>
<rect x="689" y="761" width="1" height="14" fill="#8c8ce4"/>
<rect x="691" y="761" width="1" height="14" fill="#5858f6"/>
<rect x="692" y="761" width="1" height="14" fill="#7a7aea"/>
<rect x="693" y="761" width="1" height="14" fill="#7a7aea"/>
<rect x="695" y="761" width="1" height="14" fill="#7a7aea"/>
<rect x="701" y="761" width="1" height="14" fill="#5858f6"/>
<rect x="706" y="761" width="1" height="14" fill="#7a7aea"/>
<rect x="711" y="761" width="1" height="14" fill="#5858f6"/>
<rect x="717" y="761" width="1" height="14" fill="#5858f6"/>
<rect x="719" y="761" width="1" height="14" fill="#7a7aea"/>
<rect x="720" y="761" width="1" height="14" fill="#5858f6"/>
<rect x="721" y="761" width="1" height="14" fill="#8c8ce4"/>
<rect x="722" y="761" width="1" height="14" fill="#7a7aea"/>
<rect x="723" y="761" width="1" height="14" fill="#5858f6"/>
<rect x="726" y="761" width="1" height="14" fill="#7a7aea"/>
<rect x="729" y="761" width="1" height="14" fill="#5858f6"/>
<rect x="733" y="761" width="1" height="14" fill="#5858f6"/>
<rect x="739" y="761" width="1" height="14" fill="#7a7aea"/>
<rect x="742" y="761" width="1" height="14" fill="#7a7aea"/>
<rect x="743" y="761" width="1" height="14" fill="#5858f6"/>
<rect x="744" y="761" width="1" height="14" fill="#7a7aea"/>
<rect x="745" y="761" width="1" height="14" fill="#7a7aea"/>
<rect x="746" y="761" width="1" height="14" fill="#5858f6"/>
<rect x="747" y="761" width="1" height="14" fill="#7a7aea"/>
<rect x="748" y="761" width="1" height="14" fill="#7a7aea"/>
<rect x="757" y="761" width="1" height="14" fill="#7a7aea"/>
<rect x="760" y="761" width="1" height="14" fill="#7a7aea"/>
<rect x="762" y="761" width="1" height="14" fill="#7a7aea"/>
<rect x="763" y="761" width="1" height="14" fill="#8c8ce4"/>
<rect x="764" y="761" width="1" height="14" fill="#7a7aea"/>
<rect x="765" y="761" width="1" height="14" fill="#8c8ce4"/>
<rect x="767" y="761" width="1" height="14" fill="#7a7aea"/>
<rect x="769" y="761" width="1" height="14" fill="#5858f6"/>
<rect x="772" y="761" width="1" height="14" fill="#5858f6"/>
<rect x="773" y="761" width="1" height="14" fill="#7a7aea"/>
<rect x="776" y="761" width="1" height="14" fill="#7a7aea"/>
<rect x="778" y="761" width="1" height="14" fill="#7a7aea"/>
<rect x="779" y="761" width="1" height="14" fill="#7a7aea"/>
<rect x="780" y="761" width="1" height="14" fill="#7a7aea"/>
<rect x="781" y="761" width="1" height="14" fill="#7a7aea"/>
<rect x="782" y="761" width="1" height="14" fill="#7a7aea"/>
<rect x="784" y="761" width="1" height="14" fill="#5858f6"/>
<rect x="787" y="761" width="1" height="14" fill="#7a7aea"/>
<rect x="790" y="761" width="1" height="14" fill="#7a7aea"/>
<rect x="792" y="761" width="1" height="14" fill="#5858f6"/>
<rect x="793" y="761" width="1" height="14" fill="#8c8ce4"/>
<rect x="795" y="761" width="1" height="14" fill="#7a7aea"/>
<rect x="799" y="761" width="1" height="14" fill="#8c8ce4"/>
<rect x="803" y="761" width="1" height="14" fill="#7a7aea"/>
<rect x="805" y="761" width="1" height="14" fill="#8c8ce4"/>
<rect x="806" y="761" width="1" height="14" fill="#7a7aea"/>
<rect x="807" y="761" width="1" height="14" fill="#7a7aea"/>
<rect x="809" y="761" width="1" height="14" fill="#7a7aea"/>
<rect x="810" y="761" width="1" height="14" fill="#5858f6"/>
<rect x="812" y="761" width="1" height="14" fill="#8c8ce4"/>
<rect x="813" y="761" width="1" height="14" fill="#7a7aea"/>
<rect x="815" y="761" width="1" height="14" fill="#5858f6"/>
<rect x="821" y="761" width="1" height="14" fill="#7a7aea"/>
<rect x="822" y="761" width="1" height="14" fill="#7a7aea"/>
<rect x="826" y="761" width="1" height="14" fill="#5858f6"/>
<rect x="827" y="761" width="1" height="14" fill="#7a7aea"/>
<rect x="833" y="761" width="1" height="14" fill="#7a7aea"/>
<rect x="834" y="761" width="1" height="14" fill="#7a7aea"/>
<rect x="838" y="761" width="1" height="14" fill="#7a7aea"/>
<rect x="839" y="761" width="1" height="14" fill="#7a7aea"/>
<rect x="840" y="761" width="1" height="14" fill="#7a7aea"/>
<rect x="841" y="761" width="1" height="14" fill="#5858f6"/>
<rect x="843" y="761" width="1" height="14" fill="#7a7aea"/>
<rect x="845" y="761" width="1" height="14" fill="#7a7aea"/>
<rect x="846" y="761" width="1" height="14" fill="#7a7aea"/>
<rect x="850" y="761" width="1" height="14" fill="#5858f6"/>
<rect x="851" y="761" width="1" height="14" fill="#8c8ce4"/>
<rect x="852" y="761" width="1" height="14" fill="#7a7aea"/>
<rect x="853" y="761" width="1" height="14" fill="#5858f6"/>
<rect x="856" y="761" width="1" height="14" fill="#7a7aea"/>
<rect x="857" y="761" width="1" height="14" fill="#7a7aea"/>
<rect x="861" y="761" width="1" height="14" fill="#7a7aea"/>
<rect x="862" y="761" width="1" height="14" fill="#5858f6"/>
<rect x="863" y="761" width="1" height="14" fill="#7a7aea"/>
<rect x="865" y="761" width="1" height="14" fill="#5858f6"/>
<rect x="868" y="761" width="1" height="14" fill="#5858f6"/>
<rect x="872" y="761" width="1" height="14" fill="#5858f6"/>
<rect x="873" y="761" width="1" height="14" fill="#5858f6"/>
<rect x="874" y="761" width="1" height="14" fill="#7a7aea"/>
<rect x="876" y="761" width="1" height="14" fill="#7a7aea"/>
<rect x="877" y="761" width="1" height="14" fill="#7a7aea"/>
<rect x="879" y="761" width="1" height="14" fill="#8c8ce4"/>
<rect x="881" y="761" width="1" height="14" fill="#7a7aea"/>
<rect x="883" y="761" width="1" height="14" fill="#7a7aea"/>
<rect x="884" y="761" width="1" height="14" fill="#7a7aea"/>
<rect x="886" y="761" width="1" height="14" fill="#7a7aea"/>
<rect x="887" y="761" width="1" height="14" fill="#5858f6"/>
<rect x="890" y="761" width="1" height="14" fill="#7a7aea"/>
<rect x="891" y="761" width="1" height="14" fill="#7a7aea"/>
<rect x="892" y="761" width="1" height="14" fill="#5858f6"/>
<rect x="894" y="761" width="1" height="14" fill="#5858f6"/>
<rect x="895" y="761" width="1" height="14" fill="#7a7aea"/>
<rect x="901" y="761" width="1" height="14" fill="#5858f6"/>
<rect x="903" y="761" width="1" height="14" fill="#5858f6"/>
<rect x="904" y="761" width="1" height="14" fill="#5858f6"/>
<rect x="905" y="761" width="1" height="14" fill="#5858f6"/>
<rect x="908" y="761" width="1" height="14" fill="#7a7aea"/>
<rect x="909" y="761" width="1" height="14" fill="#5858f6"/>
<rect x="910" y="761" width="1" height="14" fill="#5858f6"/>
<rect x="911" y="761" width="1" height="14" fill="#5858f6"/>
<rect x="912" y="761" width="1" height="14" fill="#5858f6"/>
<rect x="913" y="761" width="1" height="14" fill="#5858f6"/>
<rect x="914" y="761" width="1" height="14" fill="#7a7aea"/>
<rect x="920" y="761" width="1" height="14" fill="#7a7aea"/>
<rect x="923" y="761" width="1" height="14" fill="#7a7aea"/>
<rect x="924" y="761" width="1" height="14" fill="#7a7aea"/>
<rect x="931" y="761" width="1" height="14" fill="#7a7aea"/>
<rect x="934" y="761" width="1" height="14" fill="#7a7aea"/>
<rect x="935" y="761" width="1" height="14" fill="#7a7aea"/>
<rect x="938" y="761" width="1" height="14" fill="#7a7aea"/>
<rect x="940" y="761" width="1" height="14" fill="#7a7aea"/>
<rect x="320" y="761" width="11" height="14" fill="#8a8ae6" opacity="0.6"/>
<rect x="522" y="761" width="8" height="14" fill="#8a8ae6" opacity="0.6"/>
<rect x="723" y="761" width="11" height="14" fill="#8a8ae6" opacity="0.6"/>
<rect x="226" y="767.8" width="715" height="1.4" fill="#3f3ff8"/>
<rect x="877.6" y="691" width="1" height="91" fill="#f0f000"/>
</svg>
<div class="a" style="left:428px;top:121px;width:34px;height:8px;border-radius:4px;background:#c2c1c0;border:1px solid #9a9998"></div>
<div class="a" style="left:615px;top:138px;width:84px;height:33px;border:1px solid #b8b7b6;border-radius:3px;background:linear-gradient(#ebeae9,#e2e1e0)"></div>
<svg style="left:636px;top:145px" width="22" height="19"><use href="#okic" width="22" height="19"/></svg>
<div class="t" style="left:659px;top:150px;font-size:12.5px;line-height:13px">OK</div>
</div>
<div class="a" style="left:1023px;top:867px;width:57px;height:23px;background:#31363b"></div>
<div class="t" style="left:1029px;top:875px;font-size:14.5px;line-height:14.5px;color:#eff0f1;">flameshot</div>
</body></html>
